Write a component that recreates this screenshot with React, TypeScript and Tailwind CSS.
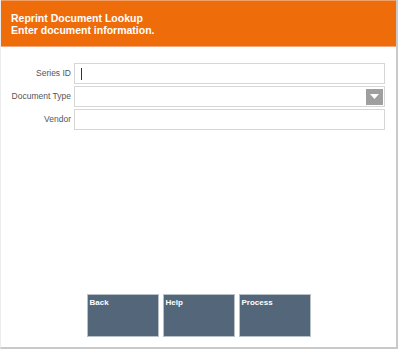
const fields = [
  { label: 'Series ID', kind: 'text', cursor: true },
  { label: 'Document Type', kind: 'select' },
  { label: 'Vendor', kind: 'text' },
];

const actions = ['Back', 'Help', 'Process'];

const App = () => {
  return (
    <div className="w-[400px] h-[349px] bg-white font-['Liberation_Sans',Arial,sans-serif] overflow-hidden">
      <div className="w-[398px] h-[349px] flex flex-col border-r-2 border-b-2 border-[#c9c9c9] border-l border-l-[#ececec]">
        {/* Header */}
        <div className="h-[47px] bg-[#ee6c0a] border-t border-[#f2a064] border-b border-b-[#f3a77a] px-[10px] pt-[11px] text-white font-bold text-[10.5px] leading-[12px]">
          <div>Reprint Document Lookup</div>
          <div>Enter document information.</div>
        </div>

        {/* Form */}
        <div className="flex flex-col gap-[2px] pt-[16px] pr-[11px]">
          {fields.map((f) => (
            <div key={f.label} className="flex items-center h-[21px]">
              <div className="w-[73px] pr-[3px] text-right text-[8.5px] text-[#555]">{f.label}</div>
              <div className="flex-1 h-[21px] border border-[#d6d6d6] bg-white flex items-center justify-between">
                {f.cursor && <div className="ml-[6px] w-px h-[12px] bg-[#333]" />}
                {f.kind === 'select' && (
                  <div className="ml-auto mr-[1px] w-[17px] h-[16px] bg-[#9f9f9f] flex items-center justify-center">
                    <svg width="9" height="5" viewBox="0 0 9 5">
                      <path d="M0 0H9L4.5 5Z" fill="#fff" />
                    </svg>
                  </div>
                )}
              </div>
            </div>
          ))}
        </div>

        {/* Actions */}
        <div className="mt-auto mb-[10px] flex justify-center gap-[4px]">
          {actions.map((a) => (
            <button
              key={a}
              className="w-[72px] h-[43px] bg-[#546679] border border-[#b8c0c8] flex items-start px-[2px] pt-[2px] text-white font-bold text-[8px]"
            >
              {a}
            </button>
          ))}
        </div>
      </div>
    </div>
  );
};

export default App;
